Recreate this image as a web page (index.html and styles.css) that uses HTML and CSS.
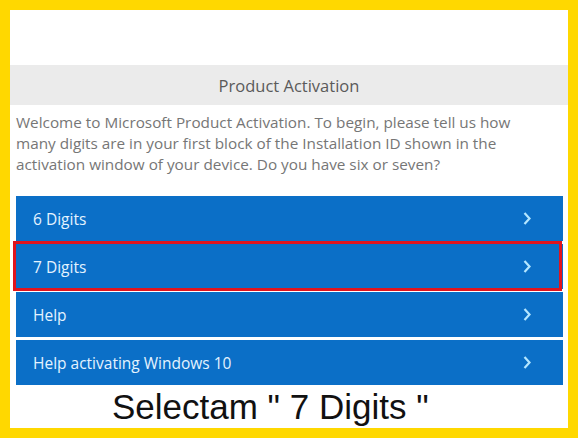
FILE: index.html
```html
<!DOCTYPE html>
<html lang="en">
<head>
  <meta charset="UTF-8">
  <meta name="viewport" content="width=device-width, initial-scale=1.0">
  <title>Product Activation</title>
  <link rel="stylesheet" href="styles.css">
</head>
<body>
  <div class="panel">
    <div class="spacer"></div>
    <header>Product Activation</header>
    <p class="intro">Welcome to Microsoft Product Activation. To begin, please tell us how many digits are in your first block of the Installation ID shown in the activation window of your device. Do you have six or seven?</p>

    <div class="list">
      <div class="item">
        <span>6 Digits</span>
        <svg class="chev" width="8" height="13" viewBox="0 0 8 13"><polyline points="1.5,1 6.5,6.5 1.5,12" /></svg>
      </div>
      <div class="item selected">
        <span>7 Digits</span>
        <svg class="chev" width="8" height="13" viewBox="0 0 8 13"><polyline points="1.5,1 6.5,6.5 1.5,12" /></svg>
      </div>
      <div class="item">
        <span>Help</span>
        <svg class="chev" width="8" height="13" viewBox="0 0 8 13"><polyline points="1.5,1 6.5,6.5 1.5,12" /></svg>
      </div>
      <div class="item">
        <span>Help activating Windows 10</span>
        <svg class="chev" width="8" height="13" viewBox="0 0 8 13"><polyline points="1.5,1 6.5,6.5 1.5,12" /></svg>
      </div>
    </div>

    <div class="caption">Selectam " 7 Digits "</div>
  </div>
</body>
</html>
```

FILE: styles.css
```css
body {
  margin: 0;
  padding: 10px;
  background-color: #ffd800;
  font-family: "Open Sans", Arial, sans-serif;
}

.panel {
  background-color: white;
  height: 418px;
  overflow: hidden;
}

.spacer {
  height: 55px;
}

header {
  background-color: #ebebeb;
  color: #5a5a5a;
  height: 40px;
  line-height: 40px;
  padding-top: 1px;
  box-sizing: border-box;
  text-align: center;
  font-size: 16.5px;
}

.intro {
  margin: 7px 0 0;
  padding: 0 24px 0 6px;
  color: #767676;
  font-size: 15.3px;
  line-height: 21px;
}

.list {
  margin-top: 21px;
  padding: 0 5px 0 6px;
  display: flex;
  flex-direction: column;
  gap: 3px;
}

.item {
  position: relative;
  height: 45px;
  background-color: #0b6fc7;
  color: #e4f3ff;
  font-size: 15.5px;
  display: flex;
  align-items: center;
  justify-content: space-between;
  padding: 0 32px 0 17px;
}

.chev polyline {
  fill: none;
  stroke: #b4e6ff;
  stroke-width: 2.2;
}

.item.selected::after {
  content: "";
  position: absolute;
  top: -3px;
  bottom: -2px;
  left: -3px;
  right: 1px;
  border: 3px solid #e0141e;
}

.caption {
  height: 43px;
  line-height: 43px;
  padding-left: 102px;
  font-family: "Liberation Sans", Arial, sans-serif;
  font-size: 35px;
  color: #111;
}
```
